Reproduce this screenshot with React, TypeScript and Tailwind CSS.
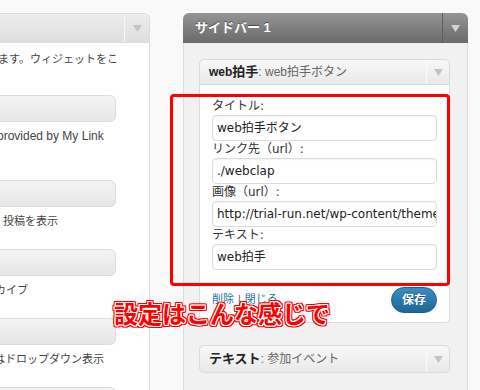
import React from "react";

const Arrow = ({ c }: { c: string }) => (
  <svg width="9" height="7" viewBox="0 0 9 7">
    <polygon points="0,0 9,0 4.5,7" fill={c} />
  </svg>
);

const Bar = () => (
  <div className="ml-[-10px] w-[126px] h-[27px] shrink-0 rounded-r-[6px] border border-[#dcdcdc] bg-gradient-to-b from-[#f4f4f4] to-[#e6e6e6]" />
);

const Label = ({ t }: { t: string }) => (
  <div className="h-[17px] leading-[17px] text-[12px] text-[#333] whitespace-nowrap font-['DejaVu_Sans','Noto_Sans_CJK_JP',sans-serif]">
    {t}
  </div>
);

const Input = ({ v }: { v: string }) => (
  <div className="h-[26px] border border-[#dcdcdc] rounded-[4px] px-[4px] flex items-center text-[12px] text-[#222] overflow-hidden whitespace-nowrap bg-white shadow-[inset_0_1px_2px_rgba(0,0,0,0.06)] font-['DejaVu_Sans','Noto_Sans_CJK_JP',sans-serif]">
    {v}
  </div>
);

export default function App() {
  return (
    <div className="w-[480px] h-[390px] overflow-hidden relative bg-[#f9f9f9] font-['Liberation_Sans','Noto_Sans_CJK_JP',sans-serif] text-[#333]">
      <div className="flex pt-[13px] h-[420px]">
        {/* left panel */}
        <div className="w-[150px] shrink-0 flex flex-col border-t border-r border-[#dcdcdc] rounded-tr-[6px] bg-white overflow-hidden">
          <div className="h-[29px] shrink-0 flex border-b border-[#dcdcdc] bg-gradient-to-b from-[#ededed] to-[#dfdfdf]">
            <div className="flex-1" />
            <div className="w-[25px] border-l border-[#f6f6f6] flex items-center justify-center">
              <Arrow c="#c4c4c4" />
            </div>
          </div>
          <div className="flex flex-col text-[11px] text-[#444]">
            <div className="mt-[8px] ml-[-2px] h-[16px] leading-[16px] whitespace-nowrap">ます。ウィジェットをこ</div>
            <div className="mt-[28px]"><Bar /></div>
            <div className="mt-[6px] ml-[-3px] h-[16px] leading-[16px] whitespace-nowrap text-[12px]">provided by My Link</div>
            <div className="mt-[36px]"><Bar /></div>
            <div className="mt-[6px] ml-[3px] h-[16px] leading-[16px] whitespace-nowrap">投稿を表示</div>
            <div className="mt-[20px]"><Bar /></div>
            <div className="mt-[6px] ml-[-5px] h-[16px] leading-[16px] whitespace-nowrap">カイブ</div>
            <div className="mt-[20px]"><Bar /></div>
            <div className="mt-[6px] ml-[-6px] h-[16px] leading-[16px] whitespace-nowrap">はドロップダウン表示</div>
            <div className="mt-[20px]"><Bar /></div>
          </div>
        </div>

        {/* sidebar panel */}
        <div className="ml-[33px] w-[285px] shrink-0 flex flex-col rounded-t-[6px] overflow-hidden">
          <div className="h-[30px] shrink-0 flex bg-gradient-to-b from-[#959595] to-[#6a6a6a]">
            <div className="flex-1 pl-[12px] flex items-center text-white font-bold text-[13px] [text-shadow:0_-1px_0_#4a4a4a] whitespace-nowrap">
              サイドバー 1
            </div>
            <div className="w-[26px] border-l border-[#5e5e5e] flex items-center justify-center">
              <Arrow c="#d4d4d4" />
            </div>
          </div>
          <div className="flex-1 bg-[#f1f1f1] border-x border-[#dcdcdc] pl-[15px] pt-[16px]">
            {/* web拍手 widget */}
            <div className="w-[251px]">
              <div className="h-[26px] flex border border-[#dcdcdc] rounded-t-[5px] bg-gradient-to-b from-[#f8f8f8] to-[#e9e9e9]">
                <div className="flex-1 pl-[9px] flex items-center whitespace-nowrap">
                  <span className="font-bold text-[12px] text-[#222]">web</span>
                  <span className="font-bold text-[13px] text-[#222]">拍手</span>
                  <span className="text-[12px] text-[#666]">: web拍手ボタン</span>
                </div>
                <div className="w-[23px] border-l border-[#fbfbfb] flex items-center justify-center">
                  <Arrow c="#c4c4c4" />
                </div>
              </div>
              <div className="bg-white border-x border-b border-[#dcdcdc] rounded-b-[5px] px-[12px] pt-[13px] pb-[9px] flex flex-col">
                <Label t="タイトル:" />
                <Input v="web拍手ボタン" />
                <Label t="リンク先（url）:" />
                <Input v="./webclap" />
                <Label t="画像（url）:" />
                <Input v="http://trial-run.net/wp-content/themes/trial-run/images/webclap.png" />
                <Label t="テキスト:" />
                <Input v="web拍手" />
                <div className="mt-[17px] h-[26px] flex items-center justify-between">
                  <div className="text-[11px] whitespace-nowrap font-['DejaVu_Sans','Noto_Sans_CJK_JP',sans-serif]">
                    <span className="text-[#21759b]">削除</span>
                    <span className="text-[#666]"> | </span>
                    <span className="text-[#21759b]">閉じる</span>
                  </div>
                  <div className="w-[46px] h-[26px] rounded-[13px] border border-[#1e5e8a] bg-gradient-to-b from-[#3690c6] to-[#1f6595] flex items-center justify-center text-white font-bold text-[12px] [text-shadow:0_-1px_0_#184f75]">
                    保存
                  </div>
                </div>
              </div>
            </div>

            {/* テキスト widget */}
            <div className="w-[251px] mt-[22px] h-[28px] flex border border-[#dcdcdc] rounded-[5px] bg-gradient-to-b from-[#f8f8f8] to-[#e9e9e9]">
              <div className="flex-1 pl-[9px] flex items-center whitespace-nowrap">
                <span className="font-bold text-[13px] text-[#222]">テキスト</span>
                <span className="text-[12px] text-[#666]">: 参加イベント</span>
              </div>
              <div className="w-[23px] border-l border-[#fbfbfb] flex items-center justify-center">
                <Arrow c="#c4c4c4" />
              </div>
            </div>
          </div>
        </div>
      </div>

      {/* annotation overlay */}
      <div className="absolute left-[170px] top-[94px] w-[280px] h-[192px] border-[3px] border-[#ff0000] rounded-[4px]" />
      <div className="absolute left-[114px] top-[298px] text-[24px] leading-[30px] font-bold text-[#ff0000] whitespace-nowrap font-['Noto_Sans_CJK_JP',sans-serif] [text-shadow:1px_0_0_#fff,-1px_0_0_#fff,0_1px_0_#fff,0_-1px_0_#fff,1px_1px_0_#fff,-1px_-1px_0_#fff,1px_-1px_0_#fff,-1px_1px_0_#fff,2px_0_0_#f00,-2px_0_0_#f00,0_2px_0_#f00,0_-2px_0_#f00,2px_2px_0_#f00,-2px_-2px_0_#f00,2px_-2px_0_#f00,-2px_2px_0_#f00,2px_1px_0_#f00,-2px_1px_0_#f00,2px_-1px_0_#f00,-2px_-1px_0_#f00,1px_2px_0_#f00,-1px_2px_0_#f00,1px_-2px_0_#f00,-1px_-2px_0_#f00]">
        設定はこんな感じで
      </div>
    </div>
  );
}
